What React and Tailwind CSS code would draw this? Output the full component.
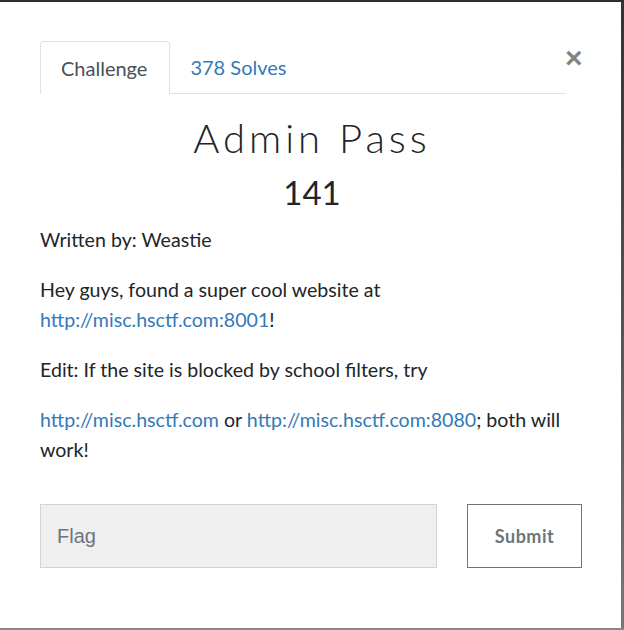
export default function App() {
  const lato = { fontFamily: 'Lato, "Open Sans", sans-serif' };
  return (
    <div className="w-[624px] h-[630px] flex flex-col bg-white overflow-hidden" style={lato}>
      <div className="h-[2px] bg-[#2e2e2e] shrink-0" />
      <div className="flex flex-1 min-h-0">
        <div className="flex-1 flex flex-col pl-[40px] pt-[39px]">
          <div className="flex items-start">
            <ul className="flex w-[526px] border-b border-[#dee2e6] h-[53px]">
              <li className="h-[53px] pl-[20px] pr-[22px] border border-b-0 border-[#dee2e6] rounded-t-[4px] bg-white flex items-center text-[20px] text-[#495057] mb-[-1px]">
                Challenge
              </li>
              <li className="h-[52px] px-[20px] flex items-center text-[20px] text-[#337ab7]">
                378 Solves
              </li>
            </ul>
            <div className="ml-[-1px] pt-[2px] text-[30px] font-bold leading-none text-[#838383]" style={{ fontFamily: '"Liberation Sans", Arial, sans-serif' }}>
              ×
            </div>
          </div>
          <div className="w-[544px] flex flex-col items-center">
            <h2 className="mt-[18px] text-[40px] font-light leading-[52px] tracking-[4px] text-[#212529]">Admin Pass</h2>
            <h3 className="mt-[8px] text-[33px] leading-[40px] font-normal text-[#212529]">141</h3>
          </div>
          <div className="w-[544px] text-[19.6px] leading-[30px] text-[#212529] mt-[13px]">
            <p>Written by: Weastie</p>
            <p className="mt-[20px]">
              Hey guys, found a super cool website at<br />
              <a className="text-[#337ab7]">http://misc.hsctf.com:8001</a>!
            </p>
            <p className="mt-[20px]">Edit: If the site is blocked by school filters, try</p>
            <p className="mt-[20px]">
              <a className="text-[#337ab7]">http://misc.hsctf.com</a> or{' '}
              <a className="text-[#337ab7]">http://misc.hsctf.com:8080</a>; both will work!
            </p>
          </div>
          <div className="flex mt-[39px]">
            <div className="w-[397px] h-[64px] bg-[#efefef] border border-[#d0d4d8] flex items-center pl-[16px] text-[20px] text-[#6c757d]" style={{ fontFamily: '"Liberation Sans", Arial, sans-serif' }}>
              Flag
            </div>
            <button className="ml-[30px] w-[115px] h-[64px] border border-[#6c757d] text-[18px] font-bold tracking-[0.5px] text-[#6c757d] bg-white">
              Submit
            </button>
          </div>
        </div>
        <div className="w-[3px] shrink-0 bg-gradient-to-b from-[#333] to-[#777]" />
      </div>
      <div className="h-[2px] bg-[#888] shrink-0" />
    </div>
  );
}
